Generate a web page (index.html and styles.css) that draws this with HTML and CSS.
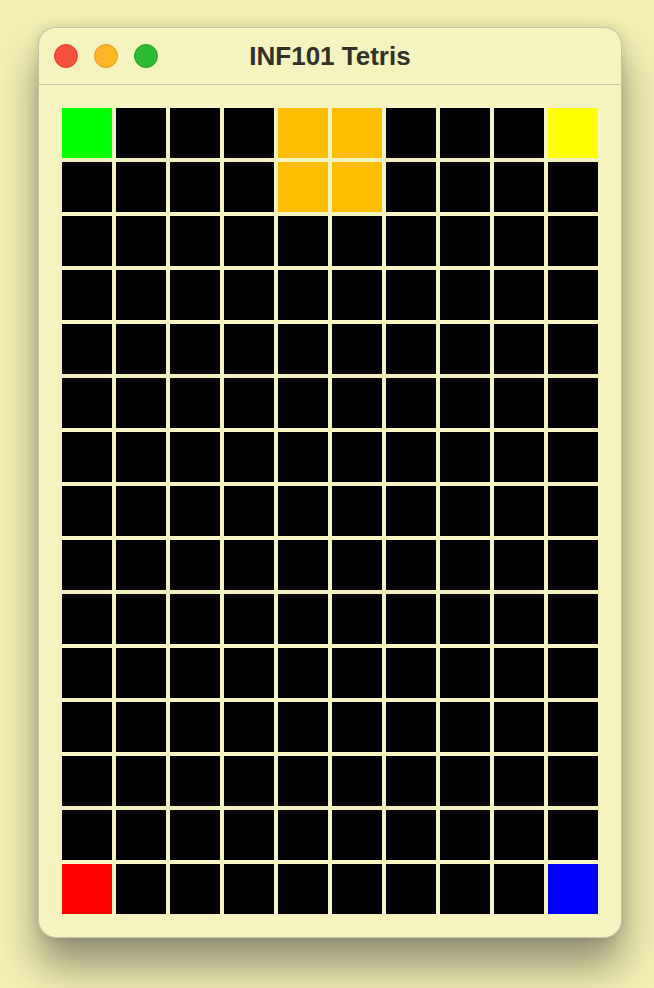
FILE: index.html
```html
<!DOCTYPE html>
<html>
<head>
<meta charset="utf-8">
<title>INF101 Tetris</title>
<link rel="stylesheet" href="styles.css">
</head>
<body>
<div class="window">
  <div class="titlebar">
    <div class="lights">
      <span class="light red"></span>
      <span class="light yellow"></span>
      <span class="light green"></span>
    </div>
    <div class="title">INF101 Tetris</div>
  </div>
  <div class="content">
    <div class="board" id="board"></div>
  </div>
</div>
<script>
  var board = document.getElementById('board');
  var special = {"0,0":"g","0,4":"o","0,5":"o","1,4":"o","1,5":"o","0,9":"y","14,0":"r","14,9":"b"};
  for (var r = 0; r < 15; r++) {
    for (var c = 0; c < 10; c++) {
      var d = document.createElement('div');
      d.className = 'cell' + (special[r + ',' + c] ? ' ' + special[r + ',' + c] : '');
      board.appendChild(d);
    }
  }
</script>
</body>
</html>
```
FILE: styles.css
```css
html, body {
  margin: 0;
  padding: 0;
  background: #f3f0b4;
  width: 654px;
  height: 988px;
  overflow: hidden;
}
body {
  display: flex;
  align-items: flex-start;
  padding: 27px 0 0 38px;
  box-sizing: border-box;
  font-family: "Liberation Sans", Arial, sans-serif;
}
.window {
  width: 584px;
  height: 911px;
  box-sizing: border-box;
  background: #f5f3c0;
  border: 1px solid #c6c3a4;
  border-radius: 18px;
  box-shadow: 0 28px 40px rgba(50, 50, 50, 0.5), 0 0 12px rgba(80, 80, 80, 0.18);
  display: flex;
  flex-direction: column;
  overflow: hidden;
}
.titlebar {
  height: 56px;
  flex: none;
  border-bottom: 1px solid #c8c5a8;
  display: flex;
  align-items: center;
  position: relative;
}
.lights {
  display: flex;
  gap: 16px;
  padding-left: 15px;
}
.light {
  width: 24px;
  height: 24px;
  border-radius: 50%;
  display: block;
  box-sizing: border-box;
}
.light.red { background: #f7503f; border: 1px solid #d9402f; }
.light.yellow { background: #fdb625; border: 1px solid #dc9a1a; }
.light.green { background: #2cbb32; border: 1px solid #1fa026; }
.title {
  position: absolute;
  left: 0;
  right: 0;
  top: 0;
  bottom: 0;
  display: flex;
  align-items: center;
  justify-content: center;
  font-weight: bold;
  font-size: 26px;
  color: #323125;
  padding-left: 0;
}
.content {
  padding: 23px 23px;
}
.board {
  display: grid;
  grid-template-columns: repeat(10, 50px);
  grid-template-rows: repeat(15, 50px);
  gap: 4px;
  background: #f5f3c0;
}
.cell { background: #000; }
.cell.g { background: #00ff00; }
.cell.o { background: #ffbd00; }
.cell.y { background: #ffff00; }
.cell.r { background: #ff0000; }
.cell.b { background: #0000ff; }
```
